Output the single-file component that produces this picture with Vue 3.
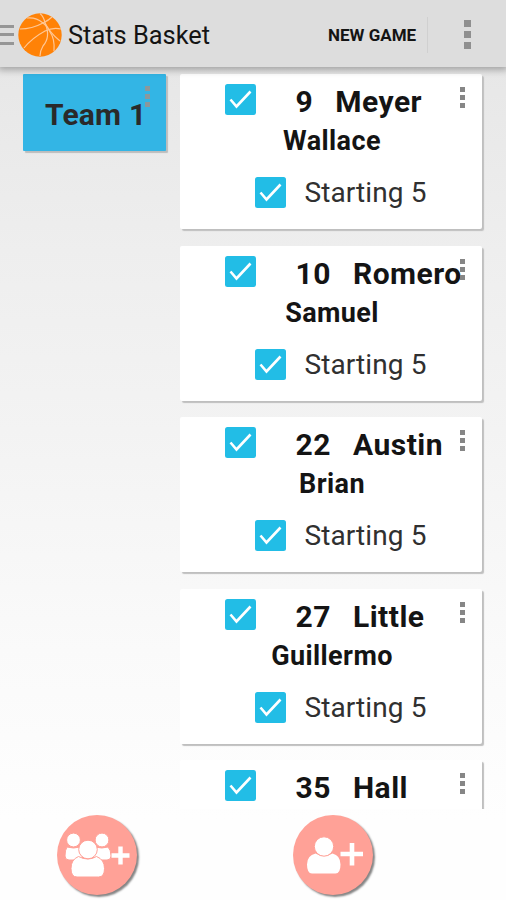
<script setup>
const players = [
  { number: 9, last: 'Meyer', first: 'Wallace' },
  { number: 10, last: 'Romero', first: 'Samuel' },
  { number: 22, last: 'Austin', first: 'Brian' },
  { number: 27, last: 'Little', first: 'Guillermo' },
  { number: 35, last: 'Hall' },
]
</script>

<template>
  <div class="screen">
    <header class="bar">
      <div class="drawer"><i></i><i></i><i></i></div>
      <svg class="ball" viewBox="0 0 44 44">
        <circle cx="22" cy="22" r="21.7" fill="#ff8207" />
        <g fill="none" stroke="#ffc795" stroke-width="1.2">
          <path d="M22 .5Q26 4 27 10 32 20 42 28" />
          <path d="M2 16Q14 16 25 10q6-3 9-6" />
          <path d="M9 5Q18 4 25 10q6 5 7 9 5 7 4 19" />
          <path d="M6 35Q14 25 27 18q8-4 16-2" />
          <path d="M27 10Q33 24 25 33q-3 5-3 10" />
        </g>
      </svg>
      <h1>Stats Basket</h1>
      <button class="new">NEW GAME</button>
      <span class="rule"></span>
      <span class="dots big"><i></i><i></i><i></i></span>
    </header>

    <main class="content">
      <aside class="teams">
        <div class="team">
          <span>Team 1</span>
          <span class="dots faded"><i></i><i></i><i></i></span>
        </div>
      </aside>
      <section class="players">
        <article v-for="p in players" :key="p.number" class="card">
          <div class="top">
            <svg class="check" viewBox="0 0 31 31"><rect width="31" height="31" rx="2.500" /><path d="M5.500 15.500l6 7L25.500 7.500" /></svg>
            <span class="number">{{ p.number }}</span>
            <span class="last">{{ p.last }}</span>
          </div>
          <template v-if="p.first">
            <div class="first">{{ p.first }}</div>
            <div class="starting">
              <svg class="check" viewBox="0 0 31 31"><rect width="31" height="31" rx="2.500" /><path d="M5.500 15.500l6 7L25.500 7.500" /></svg>
              <span>Starting 5</span>
            </div>
          </template>
          <span class="dots"><i></i><i></i><i></i></span>
        </article>
      </section>
    </main>

    <footer class="actions">
      <button class="fab">
        <svg viewBox="0 0 80 80">
          <g fill="#fff" stroke="#ffa197" stroke-width="1">
            <circle cx="16.500" cy="25" r="6.900" />
            <circle cx="45" cy="25" r="6.900" />
            <path d="M10 32q6.500 2 13 0l3 13H12q-4 0-4-4 0-6 2-9z" />
            <path d="M38 32q7 2 13 0 3 3 3 9 0 4-4 4H36z" />
            <path d="M21.500 41.500q9.500 5 18 0 8 3 8 12 0 8.500-6 8.500H20q-6 0-6-8.500 0-9 7.500-12z" />
            <circle cx="31" cy="34.500" r="9.300" />
          </g>
          <path d="M54.500 40.500h18M63.500 31.500v18" stroke="#fff" stroke-width="4.400" />
        </svg>
      </button>
      <button class="fab">
        <svg viewBox="0 0 80 80">
          <g fill="#fff">
            <path d="M22.500 38.500q8.500 5 17 0 8 2 8 11 0 9-5 9H19q-5 0-5-9 0-9 8.500-11z" />
            <circle cx="31" cy="31.500" r="9.700" stroke="#ffa197" stroke-width="1" />
          </g>
          <path d="M47.500 39h22.500M59 28v22.500" stroke="#fff" stroke-width="4.600" />
        </svg>
      </button>
    </footer>
  </div>
</template>

<style>
body { margin: 0; }
</style>

<style scoped>
* { box-sizing: border-box; }
.screen {
  width: 506px; height: 900px; overflow: hidden;
  display: flex; flex-direction: column;
  font-family: Roboto, sans-serif; color: #141414;
  background: linear-gradient(#e7e7e7 66px, #eee 250px, #f3f3f3 430px, #fafafa 650px, #fefefe 820px);
}
button { border: 0; padding: 0; background: none; font: inherit; color: inherit; }
.bar {
  flex: none; height: 67px; display: flex; align-items: center;
  padding-top: 2px;
  background: #ddd; box-shadow: 0 1px 7px 2px rgba(0, 0, 0, .3);
  position: relative; z-index: 1;
}
.drawer { width: 14px; display: flex; flex-direction: column; gap: 5.500px; }
.drawer i { height: 3px; background: #969696; }
.ball { width: 44px; height: 44px; margin-left: 4px; }
h1 { margin: 0 0 0 6px; width: 260px; font-size: 25.400px; font-weight: 400; line-height: 32px; white-space: nowrap; padding-top: 1px; }
.new { width: 88px; font-size: 17px; font-weight: 700; white-space: nowrap; text-align: left; }
.rule { width: 1px; height: 36px; margin-left: 11px; background: #d0d0d0; }
.dots { display: flex; flex-direction: column; gap: 3px; }
.dots i { width: 5px; height: 5px; background: #868686; }
.dots.big { margin-left: 36px; gap: 4px; }
.dots.big i { width: 7px; height: 7px; background: #8f8f8f; }
.content { flex: none; height: 742px; padding: 7px 22px 0 23px; display: flex; overflow: hidden; }
.teams { width: 157px; }
.team {
  position: relative; width: 143px; height: 77px; border-radius: 1px;
  display: flex; align-items: center; padding: 4px 0 0 22px;
  background: #33b5e5; box-shadow: 2px 2px 1px #bdbdbd;
  font-size: 30px; font-weight: 700; letter-spacing: .2px; color: #2a2a2a; white-space: nowrap;
}
.team .dots { position: absolute; left: 122px; top: 12px; }
.dots.faded i { background: #8b989c; }
.players { width: 302px; display: flex; flex-direction: column; gap: 16.600px; }
.card {
  flex: none; position: relative; width: 302px; height: 155px;
  padding-top: 10px; border-radius: 2px;
  background: #fff; box-shadow: 2px 2px 1px #bfbfbf;
}
.check { width: 31px; height: 31px; flex: none; }
.check rect { fill: #22bde6; }
.check path { fill: none; stroke: #fff; stroke-width: 2.600; }
.top { height: 36px; display: flex; padding-left: 45px; font-size: 30px; line-height: 35px; font-weight: 700; white-space: nowrap; letter-spacing: .5px; }
.number { margin-left: 39.500px; }
.last { margin-left: 22px; }
.first { height: 40px; line-height: 42px; font-size: 27px; font-weight: 700; text-align: center; letter-spacing: .4px; padding-left: 2px; }
.starting { display: flex; align-items: center; margin-top: 16px; height: 33px; padding-left: 75px; gap: 18.500px; font-size: 28px; letter-spacing: .1px; color: #303030; white-space: nowrap; }
.card > .dots { position: absolute; left: 280px; top: 13px; }
.actions { flex: 1; display: flex; padding: 6px 0 0 56.500px; gap: 156px; }
.fab { width: 80px; height: 80px; border-radius: 50%; background: #ffa197; box-shadow: 2px 2px 2px #858585; }
.fab svg { display: block; width: 80px; height: 80px; }
</style>
